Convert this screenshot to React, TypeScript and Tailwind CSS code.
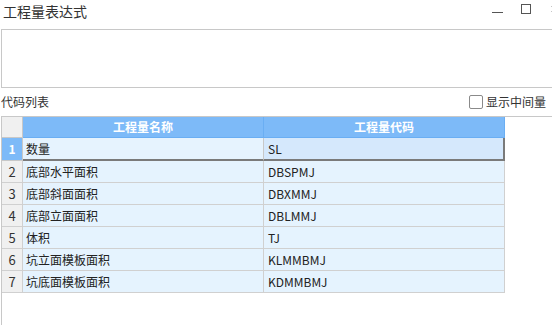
import { X } from "lucide-react"

const rows = [
  { id: 1, name: "数量", code: "SL" },
  { id: 2, name: "底部水平面积", code: "DBSPMJ" },
  { id: 3, name: "底部斜面面积", code: "DBXMMJ" },
  { id: 4, name: "底部立面面积", code: "DBLMMJ" },
  { id: 5, name: "体积", code: "TJ" },
  { id: 6, name: "坑立面模板面积", code: "KLMMBMJ" },
  { id: 7, name: "坑底面模板面积", code: "KDMMBMJ" },
]

export default function App() {
  return (
    <div className="w-[552px] h-[325px] overflow-hidden bg-white text-[#333] font-['Noto_Sans_CJK_SC',sans-serif]">
      <div className="w-[562px]">
        {/* title bar */}
        <div className="h-[29px] flex items-start justify-between">
          <div className="pl-[3px] text-[14px] leading-[22px] text-[#333]">工程量表达式</div>
          <div className="flex items-start pt-[4px] pr-[3px] gap-[18px]">
            <div className="w-[11px] h-px bg-[#555] mt-[8px]" />
            <div className="w-[10px] h-[10px] border border-[#555]" />
            <X className="w-[10px] h-[10px] text-[#888]" strokeWidth={1.5} />
          </div>
        </div>

        {/* expression box */}
        <div className="ml-px h-[59px] border border-[#c8c8c8] bg-white" />

        {/* list label row */}
        <div className="h-[28px] flex items-center justify-between pl-px pr-[16px] text-[12px]">
          <div>代码列表</div>
          <label className="flex items-center gap-[3px]">
            <span className="w-[14px] h-[14px] border border-[#8a8a8a] rounded-[2px] bg-white" />
            <span>显示中间量</span>
          </label>
        </div>

        {/* table panel */}
        <div className="ml-px h-[210px] border-t border-l border-[#c8c8c8] text-[12px]">
          <div className="flex h-[21px]">
            <div className="w-[21px] bg-[#f0f0f0] border-r border-b border-[#c8c8c8]" />
            <div className="w-[241px] bg-[#7dbaf8] border-r border-b border-[#6aaef3] flex items-center justify-center font-bold text-white">
              工程量名称
            </div>
            <div className="w-[241px] bg-[#7dbaf8] border-r border-b border-[#6aaef3] flex items-center justify-center font-bold text-white">
              工程量代码
            </div>
          </div>

          {rows.map((row) => {
            const current = row.id === 1
            return (
              <div key={row.id} className={current ? "flex h-[23px]" : "flex h-[22px]"}>
                {current ? (
                  <div className="w-[21px] bg-[#7dbaf8] border-r border-b border-[#c8c8c8] flex items-center justify-center font-bold text-white">
                    {row.id}
                  </div>
                ) : (
                  <div className="w-[21px] bg-[#f0f0f0] border-r border-b border-[#d0d0d0] flex items-center justify-center text-[#333] text-[13px]">
                    {row.id}
                  </div>
                )}
                {current ? (
                  <>
                    <div className="w-[241px] bg-[#e6f3fe] border-r border-r-[#c8c8c8] border-b-2 border-b-[#7a7a7a] flex items-center pl-[3px] text-[#222]">
                      {row.name}
                    </div>
                    <div className="w-[241px] bg-[#d5e8fc] border-r-2 border-b-2 border-[#7a7a7a] flex items-center pl-[4px] text-[#222]">
                      {row.code}
                    </div>
                  </>
                ) : (
                  <>
                    <div className="w-[241px] bg-[#e5f3fe] border-r border-b border-[#d0d0d0] flex items-center pl-[3px] text-[#222]">
                      {row.name}
                    </div>
                    <div className="w-[241px] bg-[#e5f3fe] border-r border-b border-[#d0d0d0] flex items-center pl-[4px] text-[#222]">
                      {row.code}
                    </div>
                  </>
                )}
              </div>
            )
          })}
        </div>
      </div>
    </div>
  )
}
